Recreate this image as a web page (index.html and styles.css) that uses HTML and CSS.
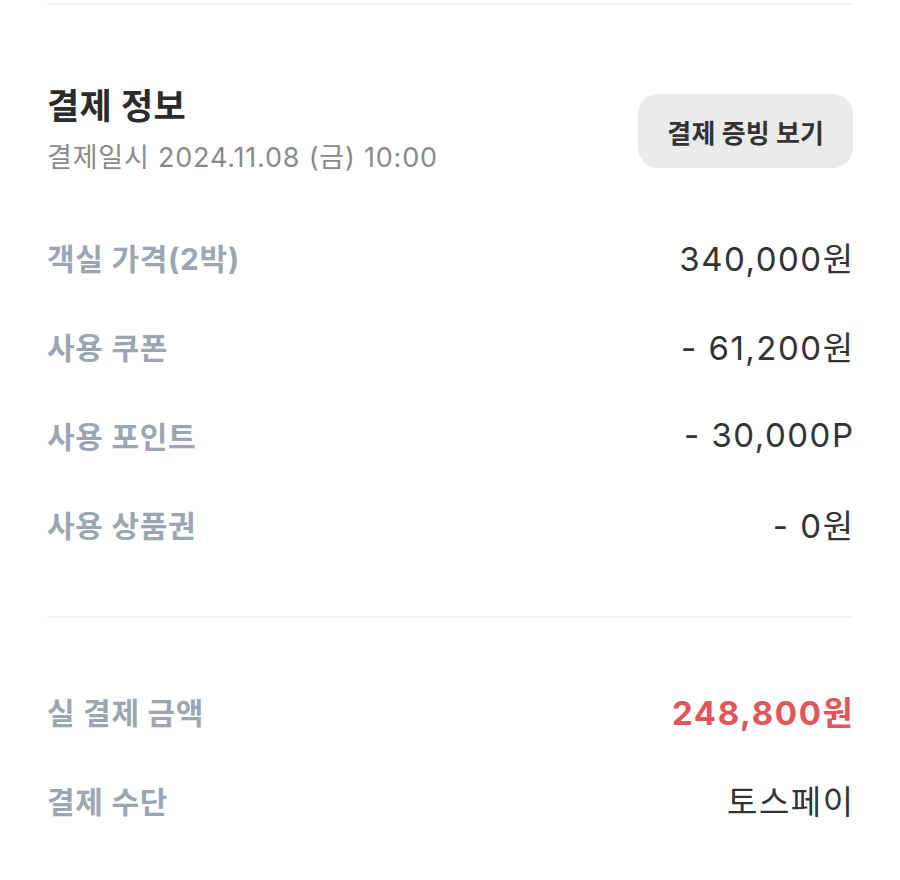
FILE: index.html
```html
<!DOCTYPE html>
<html lang="ko">
<head>
<meta charset="utf-8">
<link rel="stylesheet" href="styles.css">
</head>
<body>
<div class="page">
  <div class="divider top"></div>
  <section class="header">
    <div class="titles">
      <h2 class="title">결제 정보</h2>
      <div class="date">결제일시 2024.11.08 (금) 10:00</div>
    </div>
    <button class="proof">결제 증빙 보기</button>
  </section>
  <ul class="rows first">
    <li class="row"><span class="label">객실 가격(2박)</span><span class="value">340,000원</span></li>
    <li class="row"><span class="label">사용 쿠폰</span><span class="value">- 61,200원</span></li>
    <li class="row"><span class="label">사용 포인트</span><span class="value">- 30,000P</span></li>
    <li class="row"><span class="label">사용 상품권</span><span class="value">- 0원</span></li>
  </ul>
  <div class="divider mid"></div>
  <ul class="rows bottom">
    <li class="row"><span class="label">실 결제 금액</span><span class="value total">248,800원</span></li>
    <li class="row"><span class="label">결제 수단</span><span class="value">토스페이</span></li>
  </ul>
</div>
</body>
</html>
```
FILE: styles.css
```css
* { box-sizing: border-box; }
html, body { margin: 0; padding: 0; background: #fff; }
body {
  font-family: "Inter", "Noto Sans CJK KR", sans-serif;
  color: #333;
}
.page {
  width: 806px;
  margin-left: 47px;
  padding-top: 3px;
}
.divider { height: 2px; background: #f2f2f4; }
.header {
  display: flex;
  justify-content: space-between;
  align-items: flex-start;
  margin-top: 78px;
}
.title {
  margin: 0;
  font-size: 35px;
  font-weight: 700;
  line-height: 46px;
  color: #2b2b2b;
  letter-spacing: 0.4px;
}
.date {
  margin-top: 11px;
  font-size: 27px;
  line-height: 36px;
  color: #8a8a8a;
  letter-spacing: 0.8px;
}
.proof {
  margin-top: 11px;
  height: 74px;
  padding: 0 29px;
  border: 0;
  border-radius: 20px;
  background: #ebebeb;
  font-family: inherit;
  font-size: 26px;
  font-weight: 700;
  color: #333;
  letter-spacing: 0.1px;
}
.rows { list-style: none; margin: 0; padding: 0; }
.rows.first { margin-top: 36px; }
.row {
  display: flex;
  justify-content: space-between;
  align-items: center;
  height: 89px;
}
.label {
  font-size: 30px;
  font-weight: 700;
  color: #9ba6b2;
  letter-spacing: 0.7px;
}
.value {
  font-size: 33px;
  color: #333;
  letter-spacing: 1.5px;
  margin-right: -1.5px;
}
.value.total { color: #e2555a; font-weight: 700; letter-spacing: 1.6px; }
.mid { margin-top: 48px; }
.rows.bottom { margin-top: 48px; }
```
